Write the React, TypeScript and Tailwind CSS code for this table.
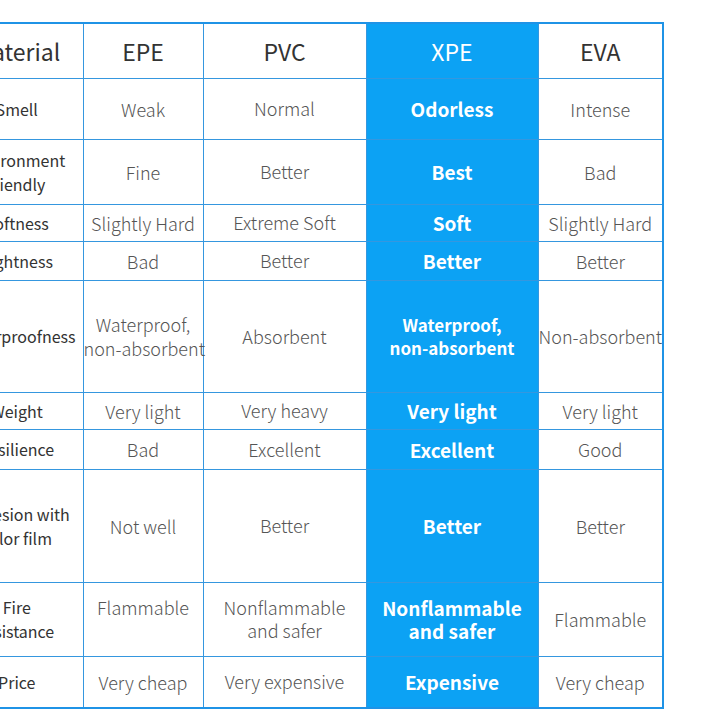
const rows: { label: string[]; h: number; epe: string[]; pvc: string[]; xpe: string[]; eva: string[]; epePad?: boolean }[] = [
  { label: ["Smell"], h: 61, epe: ["Weak"], pvc: ["Normal"], xpe: ["Odorless"], eva: ["Intense"] },
  { label: ["Environment", "friendly"], h: 65, epe: ["Fine"], pvc: ["Better"], xpe: ["Best"], eva: ["Bad"] },
  { label: ["Softness"], h: 37, epe: ["Slightly Hard"], pvc: ["Extreme Soft"], xpe: ["Soft"], eva: ["Slightly Hard"] },
  { label: ["Tightness"], h: 39, epe: ["Bad"], pvc: ["Better"], xpe: ["Better"], eva: ["Better"] },
  {
    label: ["Waterproofness"],
    h: 112,
    epe: ["Waterproof,", "non-absorbent"],
    pvc: ["Absorbent"],
    xpe: ["Waterproof,", "non-absorbent"],
    eva: ["Non-absorbent"],
  },
  { label: ["Weight"], h: 37, epe: ["Very light"], pvc: ["Very heavy"], xpe: ["Very light"], eva: ["Very light"] },
  { label: ["Resilience"], h: 40, epe: ["Bad"], pvc: ["Excellent"], xpe: ["Excellent"], eva: ["Good"] },
  {
    label: ["Adhesion with", "color film"],
    h: 113,
    epe: ["Not well"],
    pvc: ["Better"],
    xpe: ["Better"],
    eva: ["Better"],
  },
  {
    label: ["Fire", "resistance"],
    h: 74,
    epe: ["Flammable"],
    pvc: ["Nonflammable", "and safer"],
    xpe: ["Nonflammable", "and safer"],
    eva: ["Flammable"],
    epePad: true,
  },
  { label: ["Price"], h: 52, epe: ["Very cheap"], pvc: ["Very expensive"], xpe: ["Expensive"], eva: ["Very cheap"] },
];

const Lines = ({ lines, cls }: { lines: string[]; cls: string }) => (
  <div className={cls}>
    {lines.map((l, i) => (
      <div key={i}>{l}</div>
    ))}
  </div>
);

export default function App() {
  const cell = "border border-[#3597df] text-center align-middle p-0";
  return (
    <div
      className="w-[716px] h-[716px] bg-white overflow-hidden pt-[22px]"
      style={{ fontFamily: '"Noto Sans CJK SC", "Noto Sans", sans-serif' }}
    >
      <table className="ml-[-54px] table-fixed border-collapse border-2 border-[#1f93e6] w-[716px]">
        <colgroup>
          <col className="w-[136px]" />
          <col className="w-[120px]" />
          <col className="w-[163px]" />
          <col className="w-[172px]" />
          <col className="w-[125px]" />
        </colgroup>
        <thead>
          <tr className="h-[55px] text-[23px] text-[#333]">
            <th className={cell + " font-normal pl-[3px]"}>Material</th>
            <th className={cell + " font-normal"}>EPE</th>
            <th className={cell + " font-normal"}>PVC</th>
            <th className={cell + " font-normal bg-[#0ca2f4] text-white border-[#1a95e0]"}>XPE</th>
            <th className={cell + " font-normal"}>EVA</th>
          </tr>
        </thead>
        <tbody>
          {rows.map((r, i) => (
            <tr key={i} style={{ height: r.h }}>
              <td className={cell + " pl-[3px]"}>
                <Lines lines={r.label} cls="text-[16px] leading-[24px] text-[#333]" />
              </td>
              <td className={cell}>
                <Lines
                  lines={r.epe}
                  cls={"text-[18px] leading-[24px] text-[#555] font-light whitespace-nowrap" + (r.epePad ? " pb-6" : "")}
                />
              </td>
              <td className={cell}>
                <Lines lines={r.pvc} cls="text-[18px] leading-[23px] text-[#555] font-light whitespace-nowrap" />
              </td>
              <td className={cell + " bg-[#0ca2f4] border-[#1a95e0]"}>
                <Lines
                  lines={r.xpe}
                  cls={
                    (r.xpe[0] === "Waterproof,"
                      ? "text-[17px] leading-[23px]"
                      : "text-[19px] leading-[23px]") + " text-white font-semibold whitespace-nowrap"
                  }
                />
              </td>
              <td className={cell}>
                <Lines lines={r.eva} cls="text-[18px] leading-[24px] text-[#555] font-light whitespace-nowrap" />
              </td>
            </tr>
          ))}
        </tbody>
      </table>
    </div>
  );
}
